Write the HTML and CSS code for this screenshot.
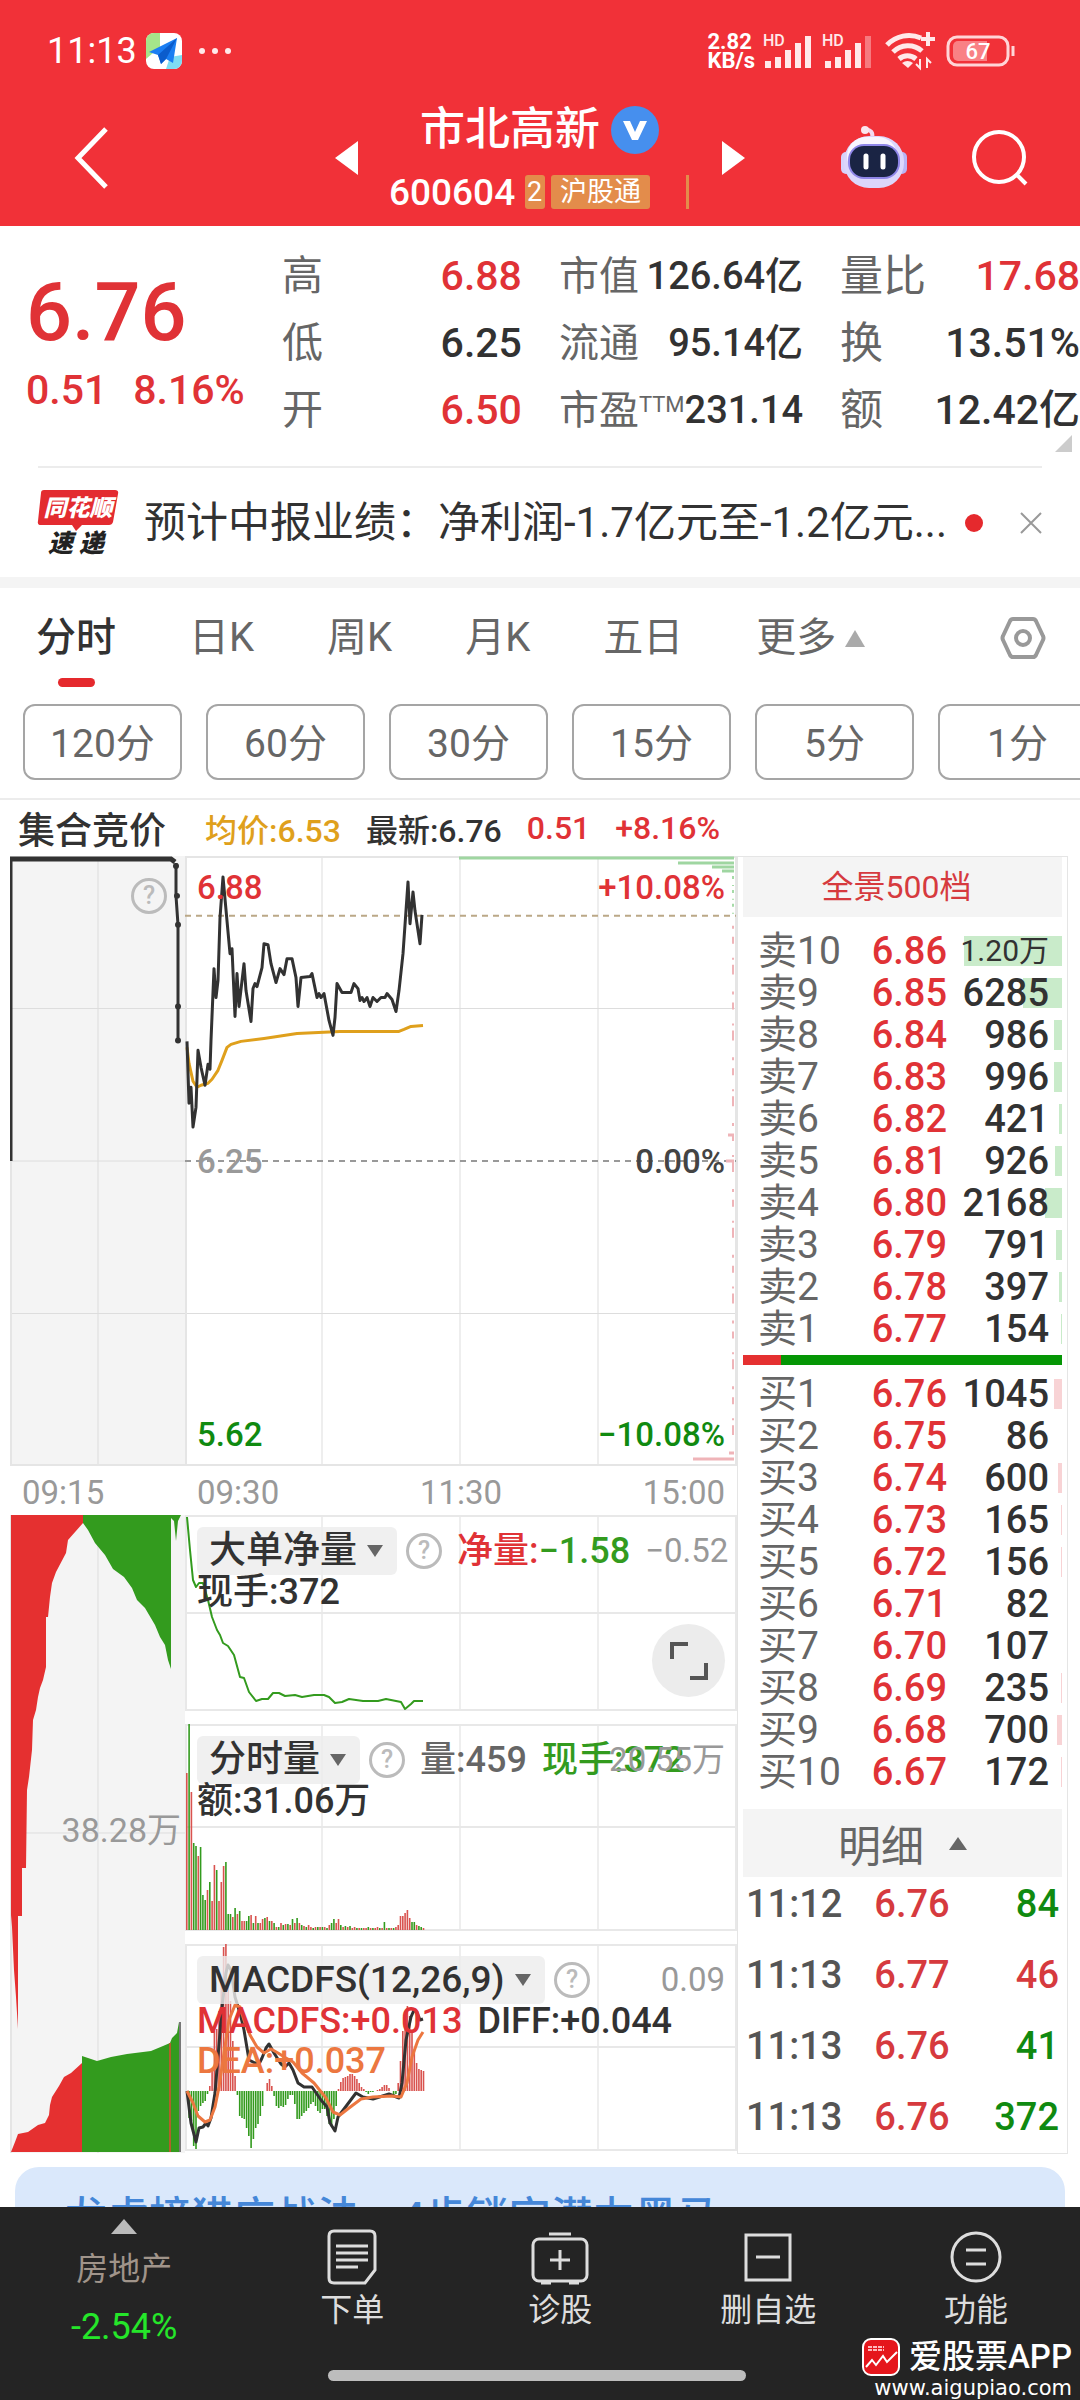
FILE: index.html
```html
<!DOCTYPE html>
<html lang="zh-CN">
  <head>
    <meta charset="utf-8">
    <meta name="viewport" content="width=device-width, initial-scale=1">
    <title>市北高新 600604</title>
    <link rel="stylesheet" href="styles.css">
  </head>
  <body>
    <div class="app">
      <header class="top">
        <div class="status">
          <span class="clock">11:13</span>
          <svg width="36" height="36" viewBox="0 0 36 36">
            <rect width="36" height="36" rx="8" fill="#fff"/>
            <path d="M8 0h6v14L0 26V8a8 8 0 0 1 8-8z" fill="#a6e58a"/>
            <path d="M20 36l4-12 12-2v6a8 8 0 0 1-8 8z" fill="#7fdcf2"/>
            <path d="M31 5L3 19l9 3 3 9 5-5 7 4z" fill="#1b7ef2"/>
            <path d="M31 5L12 22l3 9 5-5z" fill="#0b5ccc"/>
          </svg>
          <svg class="dots" width="34" height="8" viewBox="0 0 34 8" fill="#ffe9ea"><circle cx="4" cy="4" r="3"/><circle cx="17" cy="4" r="3"/><circle cx="30" cy="4" r="3"/></svg>
          <span class="speed">2.82<br>KB/s</span>
          <svg width="110" height="36" viewBox="0 0 110 36" fill="#ffe9ea">
            <text class="hd" x="0" y="13">HD</text>
            <path d="M2 28h6v7h-6zM12 24h6v11h-6zM22 17h6v18h-6zM32 10h6v25h-6zM42 3h6v32h-6z"/>
            <text class="hd" x="59" y="13">HD</text>
            <path d="M62 28h6v7h-6zM72 24h6v11h-6zM82 17h6v18h-6zM92 10h6v25h-6z"/>
            <path d="M102 3h6v32h-6z" opacity=".4"/>
          </svg>
          <svg width="50" height="38" viewBox="0 0 50 38" fill="none" stroke="#ffe9ea" stroke-width="5">
            <path d="M2 13a30 30 0 0 1 34-7M8 20a21 21 0 0 1 29-1M14 27a13 13 0 0 1 17 0"/>
            <path d="M23 36l-6-5a9 9 0 0 1 11 0z" fill="#ffe9ea" stroke="none"/>
            <path d="M43 0v14M36 7h14" stroke-width="4"/>
            <path d="M35 27v9l-4-4M42 36v-9l4 4" stroke-width="2"/>
          </svg>
          <svg width="70" height="32" viewBox="0 0 70 32">
            <rect x="2" y="2" width="60" height="28" rx="9" fill="none" stroke="#ffd5d7" stroke-width="3"/>
            <path d="M12 6h29v20H12a5 5 0 0 1-5-5V11a5 5 0 0 1 5-5z" fill="#f98185"/>
            <path d="M67 11v10" stroke="#ffd5d7" stroke-width="3"/>
            <text class="battery" x="32" y="24" text-anchor="middle">67</text>
          </svg>
        </div>
        <div class="titlebar">
          <button class="icon-btn back" aria-label="返回"><svg width="36" height="62" viewBox="0 0 36 62" fill="none" stroke="#fff" stroke-width="5"><path d="M32 2L4 31l28 29"/></svg></button>
          <button class="icon-btn prev" aria-label="上一只"><svg width="24" height="36" viewBox="0 0 24 36" fill="#fff"><path d="M23 1v34L0 18z"/></svg></button>
          <div class="stock">
            <h1 class="name">市北高新
              <svg width="48" height="48" viewBox="0 0 48 48"><circle cx="24" cy="24" r="24" fill="#468fee"/><path d="M12 15h7l5 11 5-11h7l-9 19h-6z" fill="#fff"/></svg>
            </h1>
            <div class="code-row">
              <span class="code">600604</span>
              <span class="tag tag-cut">2</span>
              <span class="tag">沪股通</span>
              <span class="tag-edge"></span>
            </div>
          </div>
          <button class="icon-btn next" aria-label="下一只"><svg width="24" height="36" viewBox="0 0 24 36" fill="#fff"><path d="M1 1v34l23-17z"/></svg></button>
          <button class="icon-btn robot" aria-label="智能助手">
            <svg width="68" height="64" viewBox="0 0 68 64">
              <path d="M32 13c2-8-3-9-6-10" fill="none" stroke="#f4d9f0" stroke-width="4"/>
              <circle cx="25" cy="4" r="4" fill="#fbe6ef"/>
              <rect x="1" y="26" width="10" height="22" rx="5" fill="#d7d2fb"/>
              <rect x="57" y="26" width="10" height="22" rx="5" fill="#b9b4f5"/>
              <rect x="4" y="10" width="60" height="52" rx="25" fill="#dcd6fb"/>
              <rect x="7" y="11" width="50" height="38" rx="19" fill="#f9f5fe"/>
              <rect x="8" y="18" width="52" height="35" rx="16" fill="#8f86e8"/>
              <rect x="10" y="20" width="48" height="31" rx="14" fill="#1a2444"/>
              <path d="M26 30v11M43 30v11" stroke="#fff" stroke-width="5" stroke-linecap="round"/>
            </svg>
          </button>
          <button class="icon-btn search" aria-label="搜索"><svg width="58" height="58" viewBox="0 0 58 58" fill="none" stroke="#fff" stroke-width="4"><circle cx="28" cy="28" r="25"/><path d="M45 45l10 10"/></svg></button>
        </div>
      </header>

      <main class="content">
        <section class="quote">
          <div class="now">
            <div class="price">6.76</div>
            <div class="change"><span>0.51</span><span>8.16%</span></div>
          </div>
          <dl class="stats">
            <div><dt>高</dt><dd class="up">6.88</dd></div>
            <div><dt>市值</dt><dd>126.64亿</dd></div>
            <div><dt>量比</dt><dd class="up">17.68</dd></div>
            <div><dt>低</dt><dd>6.25</dd></div>
            <div><dt>流通</dt><dd>95.14亿</dd></div>
            <div><dt>换</dt><dd>13.51%</dd></div>
            <div><dt>开</dt><dd class="up">6.50</dd></div>
            <div><dt>市盈<small>TTM</small></dt><dd>231.14</dd></div>
            <div><dt>额</dt><dd>12.42亿</dd></div>
          </dl>
          <span class="corner"></span>
        </section>

        <section class="news">
          <svg width="82" height="68" viewBox="0 0 82 68">
            <path d="M7 1h71q4 0 3 4l-5 28q-1 3-4 3H45l-6 6-4-6H4q-4 0-3-4L4 4q0-3 3-3z" fill="#e32b30"/>
            <text class="logo-top" x="41" y="27" text-anchor="middle">同花顺</text>
            <text class="logo-bottom" x="39" y="63" text-anchor="middle">速 递</text>
          </svg>
          <a class="headline" href="#">预计中报业绩：净利润-1.7亿元至-1.2亿元...</a>
          <span class="dot"></span>
          <button class="icon-btn" aria-label="关闭"><svg width="24" height="24" viewBox="0 0 24 24" stroke="#999" stroke-width="2"><path d="M2 2l20 20M22 2L2 22"/></svg></button>
        </section>

        <nav class="tabs">
          <button class="active">分时</button>
          <button>日K</button>
          <button>周K</button>
          <button>月K</button>
          <button>五日</button>
          <button class="more">更多</button>
          <button class="settings" aria-label="设置"><svg width="46" height="44" viewBox="0 0 46 44" fill="none" stroke="#999" stroke-width="4"><path d="M13 3h20q2 0 3 2l7 15q1 2 0 4l-7 15q-1 2-3 2H13q-2 0-3-2L3 24q-1-2 0-4l7-15q1-2 3-2z"/><circle cx="23" cy="22" r="7"/></svg></button>
        </nav>
        <div class="periods">
          <button>120分</button>
          <button>60分</button>
          <button>30分</button>
          <button>15分</button>
          <button>5分</button>
          <button>1分</button>
        </div>

        <div class="legend">
          <strong>集合竞价</strong>
          <span class="avg">均价:6.53</span>
          <span>最新:6.76</span>
          <span class="up">0.51</span>
          <span class="up">+8.16%</span>
        </div>

        <div class="market">
          <div class="charts">
            <div class="panel auction">
              <svg viewBox="10 855 175 612" preserveAspectRatio="none">
                <path d="M98 856v610M10 1008h175M10 1161h175M10 1314h175" stroke="#ddd"/>
                <path d="M11 856v610M10 1466h175" stroke="#e5e5e5" stroke-width="2"/>
                <path d="M11 1161V857" stroke="#323232" stroke-width="3" fill="none"/>
                <path d="M10 858h161l4 3" stroke="#323232" stroke-width="5" fill="none"/>
                <path d="M176 862v33l2 29v117" stroke="#323232" stroke-width="3" fill="none"/>
                <g fill="#323232"><circle cx="176" cy="865" r="3"/><circle cx="177" cy="895" r="3"/><circle cx="178" cy="924" r="3"/><circle cx="178" cy="1006" r="3"/><circle cx="178" cy="1040" r="3"/></g>
              </svg>
              <button class="help" aria-label="帮助">?</button>
            </div>
            <div class="panel intraday">
              <svg viewBox="185 855 552 612" preserveAspectRatio="none">
                <path d="M322 856v610M460 856v610M598 856v610M185 1008h551M185 1314h551" stroke="#ddd" fill="none"/>
                <path d="M186 1466V856h550v610z" stroke="#e5e5e5" stroke-width="2" fill="none"/>
                <path d="M185 915h551" stroke="#bba887" stroke-width="2" stroke-dasharray="6 5"/>
                <path d="M185 1161h551" stroke="#999" stroke-width="2" stroke-dasharray="6 5"/>
                <path d="M459 857h275M678 862h56M712 866h22M722 870h12" stroke="#9fd6a1" stroke-width="3"/>
                <path d="M733 875v42" stroke="#a6dba8" stroke-width="2" stroke-dasharray="3 6 1 4"/>
                <path d="M733 925v530" stroke="#efb4b8" stroke-width="2" stroke-dasharray="3 8 7 14 2 5 10 17"/>
                <path d="M728 1135h6M726 1161h8M729 1454h5M693 1460h41" stroke="#efb4b8" stroke-width="3"/>
                <polyline class="avg-line" points="187,1047 189,1063 193,1081 197,1087 201,1085 208,1083 212,1079 218,1070 222,1060 227,1047 231,1044 241,1041 264,1038 297,1033 340,1031 399,1031 404,1029 411,1026 423,1025"/>
                <polyline class="price-line" points="187,1041 189,1103 191,1087 193,1127 196,1107 198,1050 201,1067 205,1085 208,1064 210,1069 211,1040 214,968 216,997 218,980 220,917 223,876 227,920 230,953 232,948 235,1016 237,973 239,1006 244,963 246,990 251,1021 253,988 255,983 257,986 262,967 264,943 268,944 271,963 276,982 280,968 284,974 287,958 292,958 296,977 298,1006 301,977 310,976 312,973 317,997 319,993 321,997 324,993 329,1020 333,1035 335,1017 337,983 342,992 351,992 354,983 358,988 360,1000 362,997 364,1001 367,997 370,1006 373,997 377,1001 381,997 385,997 387,993 392,999 396,1011 399,990 403,953 408,881 410,923 413,891 415,910 420,943 422,914"/>
              </svg>
              <div class="scale">
                <div class="up"><span>6.88</span><span>+10.08%</span></div>
                <div class="flat"><span>6.25</span><span class="zero">0.00%</span></div>
                <div class="down"><span>5.62</span><span>−10.08%</span></div>
              </div>
            </div>

            <div class="axis">09:15</div>
            <div class="axis"><span>09:30</span><span>11:30</span><span>15:00</span></div>

            <div class="panel auction auction-volume">
              <svg viewBox="10 1515 175 638" preserveAspectRatio="none">
                <path d="M98 1515v638M10 1833h175" stroke="#ddd"/>
                <path d="M11 1515v638" stroke="#e5e5e5" stroke-width="2"/>
                <path fill="#e53030" d="M11 1515H83v8L68 1540 66 1553 56 1572 52 1583 50 1597 48 1617H46V1667L43 1680 40 1688 38 1697 36 1710 33 1720 32 1750 29 1777 27 1790 26 1868H22V1916H18V2029L16 1997 14 1970 12 1927 11 1915z"/>
                <path fill="#339b1e" d="M83 1515H181L178 1521 176 1541 174 1521 171 1518V1669L168 1660 165 1645 160 1637 155 1625 145 1608 137 1600 132 1588 124 1577 113 1569 105 1555 95 1543 88 1530 83 1523z"/>
                <path fill="#e53030" d="M11 2152L15 2142 18 2134 28 2132 38 2125 45 2123 49 2115 50 2105 52 2097 59 2086 64 2077 71 2073 82 2063V2152z"/>
                <path fill="#339b1e" d="M82 2152V2056L85 2057 97 2061 111 2057 127 2054 151 2051 163 2046 170 2043 172 2038 177 2033 179 2022H181V2152z"/>
                <path d="M170 2043v109" stroke="#b0602a" stroke-width="2"/>
                <path d="M180 2022v130" stroke="#777" stroke-width="2"/>
              </svg>
              <span class="volume-mid">38.28万</span>
            </div>

            <div class="indicators">
              <div class="panel indicator">
                <svg viewBox="185 1515 552 196" preserveAspectRatio="none">
                  <path d="M322 1515v195M460 1515v195M598 1515v195" stroke="#ddd"/>
                  <path d="M186 1516h550v194H186zM186 1613h550" stroke="#e8e8e8" stroke-width="2" fill="none"/>
                  <polyline class="net-line" points="187,1517 190,1550 193,1580 196,1587 199,1583 203,1583 208,1600 212,1617 217,1630 220,1635 223,1643 228,1646 234,1655 240,1677 244,1678 249,1692 256,1701 262,1699 268,1699 273,1693 279,1693 285,1696 295,1695 302,1697 314,1695 324,1695 329,1697 335,1703 342,1702 349,1699 363,1701 378,1701 386,1699 401,1702 405,1709 411,1704 414,1701 423,1701"/>
                </svg>
                <div class="readout">
                  <div class="line first">
                    <label class="picker"><select aria-label="指标一"><option>大单净量</option></select></label>
                    <button class="help" aria-label="帮助">?</button>
                    <span><span class="up">净量:</span><span class="sell">−1.58</span></span>
                    <span class="bound">−0.52</span>
                  </div>
                  <div class="line">现手:372</div>
                </div>
                <button class="expand" aria-label="全屏"><svg width="40" height="40" viewBox="0 0 40 40" fill="none" stroke="#555" stroke-width="4"><path d="M3 18V3h16M37 22v15H21"/></svg></button>
              </div>

              <div class="panel indicator">
                <svg viewBox="185 1724 552 207" preserveAspectRatio="none">
                  <path d="M322 1724v206M460 1724v206M598 1724v206" stroke="#ddd"/>
                  <path d="M186 1725h550v205H186zM186 1827h550" stroke="#e8e8e8" stroke-width="2" fill="none"/>
                  <g id="volume_bars"></g>
                </svg>
                <div class="readout">
                  <div class="line first">
                    <label class="picker"><select aria-label="指标二"><option>分时量</option></select></label>
                    <button class="help" aria-label="帮助">?</button>
                    <span class="muted">量:459</span>
                    <span class="sell">现手:372</span>
                    <span class="bound over">20.55万</span>
                  </div>
                  <div class="line">额:31.06万</div>
                </div>
              </div>

              <div class="panel indicator">
                <svg viewBox="185 1944 552 207" preserveAspectRatio="none">
                  <path d="M322 1944v206M460 1944v206M598 1944v206" stroke="#ddd"/>
                  <path d="M186 1945h550v205H186zM186 2047h550" stroke="#e8e8e8" stroke-width="2" fill="none"/>
                  <g id="macd_bars"></g>
                  <polyline class="diff-line" points="187,2091 191,2123 196,2142 199,2128 203,2127 206,2123 208,2126 211,2118 215,2093 218,2057 222,2007 226,1973 228,1965 231,1970 235,1997 240,2013 244,2030 249,2060 255,2063 259,2064 262,2058 266,2048 269,2044 274,2053 281,2064 285,2067 289,2063 293,2070 298,2083 304,2087 312,2087 321,2100 327,2107 330,2123 335,2131 338,2117 347,2105 356,2093 363,2097 373,2099 389,2094 399,2098 402,2083 406,2040 411,2017 414,2010 417,2012 420,2020 423,2019"/>
                  <polyline class="dea-line" points="187,2091 193,2103 198,2116 205,2122 210,2120 215,2107 219,2087 224,2053 229,2020 235,2005 240,2007 244,2020 250,2035 257,2047 264,2053 271,2049 278,2053 286,2058 293,2062 302,2073 314,2083 326,2098 333,2112 340,2115 349,2108 361,2099 373,2097 392,2096 401,2097 407,2083 412,2057 418,2040 423,2032"/>
                </svg>
                <div class="readout">
                  <div class="line first">
                    <label class="picker"><select aria-label="指标三"><option>MACDFS(12,26,9)</option></select></label>
                    <button class="help" aria-label="帮助">?</button>
                    <span class="bound">0.09</span>
                  </div>
                  <div class="line"><span class="up">MACDFS:+0.013</span><span>DIFF:+0.044</span></div>
                  <div class="line dea">DEA:+0.037</div>
                </div>
              </div>
            </div>
          </div>

          <aside class="depth">
            <button class="depth-head">全景500档</button>
            <table class="book" id="asks"></table>
            <div class="ratio"><span></span></div>
            <table class="book" id="bids"></table>
            <button class="ticks-head">明细</button>
            <table class="ticks">
              <tr><td>11:12</td><td class="up">6.76</td><td class="down">84</td></tr>
              <tr><td>11:13</td><td class="up">6.77</td><td class="up">46</td></tr>
              <tr><td>11:13</td><td class="up">6.76</td><td class="down">41</td></tr>
              <tr><td>11:13</td><td class="up">6.76</td><td class="down">372</td></tr>
            </table>
          </aside>
        </div>

        <a class="banner" href="#">龙虎榜猎庄战法，4步锁定潜力黑马</a>
      </main>

      <footer class="bottom">
        <nav class="actions">
          <a class="sector" href="#"><span class="sector-name">房地产</span><span class="sector-change">-2.54%</span></a>
          <a href="#">
            <svg width="58" height="58" viewBox="0 0 58 58" fill="none" stroke="#ddd" stroke-width="3"><path d="M11 3h36q5 0 5 5v34L42 55H11q-5 0-5-5V8q0-5 5-5zM13 18h32M13 25h32M13 32h32M13 39h22"/></svg>
            下单
          </a>
          <a href="#">
            <svg width="58" height="58" viewBox="0 0 58 58" fill="none" stroke="#ddd" stroke-width="3"><rect x="2" y="11" width="54" height="42" rx="6"/><path d="M18 6h22M29 22v20M19 32h20M10 55h10M38 55h10"/></svg>
            诊股
          </a>
          <a href="#">
            <svg width="58" height="58" viewBox="0 0 58 58" fill="none" stroke="#ddd" stroke-width="3"><path d="M7 7h44v45H7zM17 29h24"/></svg>
            删自选
          </a>
          <a href="#">
            <svg width="58" height="58" viewBox="0 0 58 58" fill="none" stroke="#ddd" stroke-width="3"><circle cx="29" cy="29" r="24"/><path d="M19 22h20M19 36h20"/></svg>
            功能
          </a>
        </nav>
        <div class="home-bar"></div>
        <div class="mark">
          <div class="mark-name">
            <svg width="38" height="38" viewBox="0 0 38 38"><rect x="1" y="1" width="36" height="36" rx="8" fill="#e5161c" stroke="#fff" stroke-width="2"/><path d="M6 9h16M6 12h16" stroke="#ffb9bb" stroke-width="2" stroke-dasharray="4 1"/><path d="M4 29l6-7 4 5 7-9 4 6 10-10" fill="none" stroke="#fff" stroke-width="2"/></svg>
            爱股票APP
          </div>
          <div class="mark-url">www.aigupiao.com</div>
        </div>
      </footer>
    </div>
    <script src="script.js"></script>
  </body>
</html>
```
FILE: styles.css
```css
* {
  box-sizing: border-box;
}

body {
  margin: 0;
  background: #fff;
  color: #323232;
  font-family: Roboto, "Noto Sans CJK SC", sans-serif;
  font-weight: 500;
}

button,
select {
  margin: 0;
  padding: 0;
  border: 0;
  background: none;
  color: inherit;
  font: inherit;
}

a {
  color: inherit;
  text-decoration: none;
}

svg {
  display: block;
}

table {
  border-collapse: collapse;
}

.up {
  color: #e03236;
}

.down {
  color: #108a10;
}

.sell {
  color: #339b1e;
}

.muted {
  color: #666;
}

.app {
  display: flex;
  flex-direction: column;
  height: 100vh;
}

/* header */

.top {
  background: #f13138;
  color: #fff;
}

.status {
  display: flex;
  align-items: center;
  height: 102px;
  padding: 0 64px 0 47px;
}

.status svg {
  overflow: visible;
}

.clock {
  width: 99px;
  font-size: 36px;
  font-weight: 400;
}

.dots {
  margin-left: 16px;
}

.speed {
  margin: 0 8px 0 auto;
  font-size: 22px;
  font-weight: 700;
  line-height: 19px;
}

.status svg:nth-last-child(2) {
  margin: 0 11px 0 12px;
}

.hd {
  font-size: 16px;
}

.battery {
  fill: #fff;
  font-size: 22px;
}

.titlebar {
  display: grid;
  grid-template-columns: 110px 1fr 362px 90px 126px 126px;
  align-items: center;
  height: 124px;
  padding: 0 17px 12px 0;
}

.back,
.prev {
  justify-self: end;
}

.next {
  justify-self: start;
}

.stock {
  padding-left: 30px;
}

.name {
  display: flex;
  align-items: center;
  gap: 11px;
  margin: 0;
  padding-left: 31px;
  font-size: 45px;
  font-weight: 500;
  line-height: 56px;
}

.code-row {
  display: flex;
  align-items: center;
  gap: 6px;
  height: 44px;
  margin-top: 12px;
}

.code {
  width: 130px;
  font-size: 37px;
}

.tag {
  padding: 0 9px;
  border-radius: 3px;
  background: #e38c4b;
  font-size: 27px;
  font-weight: 400;
  line-height: 34px;
}

.tag-cut {
  width: 20px;
  padding: 0 2px;
}

.tag-edge {
  width: 3px;
  height: 34px;
  margin-left: 30px;
  background: #e38c4b;
}

.robot,
.search {
  justify-self: center;
}

/* quote */

.content {
  flex: 1;
  min-height: 0;
  overflow: hidden;
}

.quote {
  position: relative;
  display: grid;
  grid-template-columns: 256px 1fr;
  padding: 17px 0 24px 26px;
}

.quote::after {
  content: "";
  position: absolute;
  right: 38px;
  bottom: 0;
  left: 38px;
  border-bottom: 2px solid #ececec;
}

.now {
  padding-top: 24px;
  color: #e03236;
}

.price {
  font-size: 81px;
  line-height: 92px;
}

.change {
  display: flex;
  gap: 26px;
  font-size: 41px;
  line-height: 62px;
}

.stats {
  display: grid;
  grid-template-columns: 1fr 1fr 1fr;
  column-gap: 37px;
  margin: 0;
  font-size: 41px;
  line-height: 67px;
}

.stats div {
  display: flex;
  justify-content: space-between;
  height: 67px;
  white-space: nowrap;
}

.stats dt {
  color: #666;
  font-weight: 400;
}

.stats small {
  font-size: 22px;
  vertical-align: 12px;
  line-height: 1;
}

.stats dd {
  margin: 0;
}

.stats div:nth-child(3n+2) {
  font-size: 40px;
}

.stats div:nth-child(3n+2) dd {
  font-size: 38px;
}

.stats div:nth-child(3n) dt {
  font-size: 43px;
}

.corner {
  position: absolute;
  right: 8px;
  bottom: 16px;
  border: solid transparent;
  border-width: 0 0 17px 17px;
  border-bottom-color: #ccc;
}

.news {
  display: flex;
  align-items: center;
  height: 109px;
  padding: 0 37px;
}

.logo-top,
.logo-bottom {
  fill: #fff;
  font-size: 23px;
  font-style: italic;
  font-weight: 900;
}

.logo-bottom {
  fill: #222;
  font-size: 25px;
}

.headline {
  flex: 1;
  min-width: 0;
  margin-left: 25px;
  overflow: hidden;
  font-size: 42px;
  font-weight: 400;
  line-height: 60px;
  text-overflow: ellipsis;
  white-space: nowrap;
}

.dot {
  width: 18px;
  height: 18px;
  margin-right: 36px;
  border-radius: 50%;
  background: #e5292d;
}

/* chart tabs */

.tabs {
  display: flex;
  align-items: flex-start;
  gap: 73px;
  padding: 22px 34px 17px 36px;
  border-top: 11px solid #f4f4f4;
  color: #666;
  font-size: 40px;
  line-height: 56px;
}

.tabs button {
  font-weight: 400;
}

.tabs .active {
  color: #323232;
  font-weight: 500;
}

.active::after {
  content: "";
  display: block;
  width: 37px;
  height: 9px;
  margin: 12px auto 0;
  border-radius: 5px;
  background: #e5292d;
}

.more {
  display: flex;
  align-items: center;
  gap: 9px;
}

.more::after {
  content: "";
  border: 10px solid transparent;
  border-top: 0;
  border-bottom: 17px solid #aaa;
}

.tabs .settings {
  margin: 6px 0 0 auto;
}

.periods {
  display: flex;
  gap: 24px;
  height: 94px;
  padding: 0 23px 18px;
  overflow: hidden;
}

.periods button {
  flex: none;
  width: 159px;
  padding-bottom: 4px;
  border: 2px solid #a5a5a5;
  border-radius: 12px;
  color: #666;
  font-size: 39px;
  font-weight: 400;
}

.legend {
  display: flex;
  align-items: center;
  gap: 25px;
  height: 58px;
  padding-left: 18px;
  border-top: 2px solid #ececec;
  font-size: 32px;
}

.legend strong {
  margin-right: 14px;
  font-size: 37px;
  font-weight: 500;
}

.avg {
  color: #dfa01c;
}

/* charts and order book */

.market {
  display: grid;
  grid-template-columns: minmax(0, 1fr) 331px;
  padding: 0 12px 0 10px;
}

.charts {
  display: grid;
  grid-template-columns: 175px minmax(0, 1fr);
  align-content: start;
}

.panel {
  position: relative;
  display: grid;
  grid-template-columns: minmax(0, 1fr);
  height: 610px;
}

.panel > svg {
  grid-area: 1 / 1;
  width: 100%;
  height: 100%;
}

.auction {
  background: #f4f4f4;
}

.auction-volume {
  height: 638px;
}

.help {
  flex: none;
  width: 36px;
  height: 36px;
  border: 3px solid #bbb;
  border-radius: 50%;
  color: #bbb;
  font-size: 25px;
  line-height: 30px;
}

.auction .help {
  position: absolute;
  top: 22px;
  right: 18px;
}

.scale {
  z-index: 1;
  display: flex;
  flex-direction: column;
  grid-area: 1 / 1;
  justify-content: space-between;
  padding: 12px 12px 11px;
  font-size: 33px;
  line-height: 40px;
}

.scale div {
  display: flex;
  justify-content: space-between;
}

.flat {
  color: #999;
}

.zero {
  color: #444;
}

.axis {
  display: flex;
  justify-content: space-between;
  padding: 4px 12px 0;
  color: #999;
  font-size: 33px;
  font-weight: 400;
  line-height: 45px;
}

.volume-mid {
  z-index: 1;
  grid-area: 1 / 1;
  place-self: center end;
  margin: 0 4px 14px 0;
  color: #999;
  font-size: 34px;
  font-weight: 400;
}

.indicators {
  display: flex;
  flex-direction: column;
  gap: 13px;
}

.indicator {
  height: 207px;
}

.indicator:first-child {
  height: 196px;
}

.readout {
  z-index: 1;
  grid-area: 1 / 1;
  padding: 12px 12px 0;
  font-size: 36px;
  line-height: 40px;
}

.line {
  display: flex;
  gap: 15px;
  white-space: nowrap;
}

.line.first {
  align-items: center;
  height: 48px;
  margin-bottom: -3px;
}

.picker {
  display: flex;
  align-items: center;
  gap: 10px;
  height: 48px;
  padding: 0 14px 0 12px;
  border-radius: 6px;
  background: rgba(236, 236, 236, 0.8);
  font-size: 37px;
}

.picker::after {
  content: "";
  border: 8px solid transparent;
  border-top: 12px solid #666;
  border-bottom: 0;
}

.picker select {
  appearance: none;
  line-height: 48px;
}

.picker + .help {
  margin-left: -6px;
}

.line .bound {
  margin: 0 0 0 auto;
  color: #999;
  font-size: 33px;
  font-weight: 400;
}

.line .over {
  position: absolute;
  right: 12px;
}

.dea {
  color: #ec7740;
}

.expand {
  position: absolute;
  right: 12px;
  bottom: 14px;
  z-index: 1;
  display: grid;
  place-items: center;
  width: 73px;
  height: 73px;
  border-radius: 50%;
  background: #ececec;
}

.price-line,
.avg-line,
.net-line,
.diff-line,
.dea-line {
  fill: none;
  stroke: #323232;
  stroke-width: 3;
  stroke-linejoin: round;
}

.avg-line {
  stroke: #dfa01c;
}

.net-line {
  stroke: #339b1e;
  stroke-width: 2;
}

.dea-line {
  stroke: #ec7740;
}

.depth {
  padding: 0 5px;
  border: 1px solid #e5e5e5;
}

.depth-head {
  display: block;
  width: 100%;
  height: 60px;
  margin-bottom: 13px;
  padding: 0 12px 6px 0;
  background: #f4f4f4;
  color: #d63a3e;
  font-size: 32px;
  font-weight: 400;
}

.book {
  width: 100%;
  table-layout: fixed;
  line-height: 42px;
}

.book td {
  height: 42px;
  padding: 0;
  font-size: 38px;
}

.book td:first-child {
  width: 112px;
  padding-left: 15px;
  color: #666;
  font-size: 39px;
  font-weight: 400;
  white-space: nowrap;
}

.book td:nth-child(2) {
  width: 92px;
  text-align: right;
}

.book .amount {
  position: relative;
  padding-right: 13px;
  text-align: right;
  white-space: nowrap;
}

.book .small {
  font-size: 30px;
  font-weight: 400;
}

.amount span {
  position: relative;
}

.bar {
  position: absolute;
  top: 6px;
  right: 0;
  height: 30px;
  background: #c9ebca;
}

#bids .bar {
  background: #f8d3d5;
}

.ratio {
  height: 10px;
  margin: 5px 0 8px;
  background: #059605;
}

.ratio span {
  display: block;
  width: 12%;
  height: 10px;
  background: #e53030;
}

.ticks-head {
  display: flex;
  align-items: center;
  justify-content: center;
  gap: 25px;
  width: 100%;
  height: 68px;
  margin: 16px 0 2px;
  background: #f4f4f4;
  color: #666;
  font-size: 43px;
  font-weight: 400;
}

.ticks-head::after {
  content: "";
  border: 9px solid transparent;
  border-top: 0;
  border-bottom: 13px solid #666;
}

.ticks {
  width: 100%;
  font-size: 38px;
  line-height: 51px;
}

.ticks td {
  padding: 0 3px 20px 3px;
  color: #555;
}

.ticks tr:last-child td {
  padding-bottom: 10px;
}

.ticks td.up {
  color: #d63a3e;
}

.ticks td.down {
  color: #108a10;
}

.ticks td:last-child {
  text-align: right;
}

.banner {
  display: block;
  height: 120px;
  margin: 13px 15px 0;
  padding: 21px 50px;
  border-radius: 24px;
  background: #dae8fb;
  color: #4587d8;
  font-size: 42px;
  line-height: 60px;
}

/* bottom bar */

.bottom {
  position: relative;
  flex: none;
  height: 193px;
  background: #242424;
  color: #ddd;
}

.actions {
  display: grid;
  grid-template-columns: 23% repeat(4, 1fr);
  font-size: 32px;
  font-weight: 400;
  line-height: 48px;
}

.actions a {
  display: flex;
  flex-direction: column;
  align-items: center;
  padding-top: 21px;
}

.actions .sector {
  padding-top: 12px;
}

.sector::before {
  content: "";
  border: 13px solid transparent;
  border-top: 0;
  border-bottom: 15px solid #bbb;
}

.sector-name {
  margin-top: 11px;
  color: #a0948a;
}

.sector-change {
  margin-top: 10px;
  color: #25e62a;
  font-size: 36px;
}

.home-bar {
  position: absolute;
  bottom: 19px;
  left: 50%;
  width: 418px;
  height: 11px;
  margin-left: -212px;
  border-radius: 6px;
  background: #bdbdbd;
}

.mark {
  position: absolute;
  right: 8px;
  bottom: 0;
  color: #fff;
}

.mark-name {
  display: flex;
  align-items: center;
  gap: 9px;
  font-size: 33px;
  line-height: 38px;
}

.mark-url {
  font-family: "DejaVu Sans", sans-serif;
  font-size: 21px;
  line-height: 24px;
  text-align: right;
}
```
FILE: script.js
```javascript
const red = '#d9534f';
const green = '#339b1e';

// label, price, amount, bar width
const asks = [
  ['卖10', '6.86', '1.20万', 98], ['卖9', '6.85', '6285', 39], ['卖8', '6.84', '986', 8],
  ['卖7', '6.83', '996', 8], ['卖6', '6.82', '421', 3], ['卖5', '6.81', '926', 7],
  ['卖4', '6.80', '2168', 17], ['卖3', '6.79', '791', 6], ['卖2', '6.78', '397', 3],
  ['卖1', '6.77', '154', 1]
];
const bids = [
  ['买1', '6.76', '1045', 8], ['买2', '6.75', '86', 0], ['买3', '6.74', '600', 4],
  ['买4', '6.73', '165', 1], ['买5', '6.72', '156', 1], ['买6', '6.71', '82', 0],
  ['买7', '6.70', '107', 0], ['买8', '6.69', '235', 1], ['买9', '6.68', '700', 5],
  ['买10', '6.67', '172', 1]
];

// minus means a falling minute
const volume = [
  157, -207, 138, -87, -84, 74, -83, -35, -30, 40, -48, 29, 65, -60, 29, 48, 64, -68, -16, -16,
  13, -22, 16, -19, 9, 9, -9, -14, 15, -7, 14, -7, 7, 11, -12, 13, -9, 9, -7, 3,
  -3, 7, -5, 6, -6, 5, -11, 7, -12, 7, -5, 4, -3, 5, 3, -2, 3, -3, 3, -3,
  3, -2, 5, -7, -11, 7, 11, -5, 3, -4, 3, -4, 2, 3, -2, 2, -2, 2, 2, -3,
  2, -2, 2, 3, -2, 2, -8, 2, -2, 2, -2, 3, 5, 14, 14, 17, 20, 12, -8, -8,
  5, -4, -3, 2
];

const macd = [
  -3, -27, -30, -55, -58, -20, -15, -12, -10, -3, 5, 20, 60, 62, 80, 110, 144, 147, 110, 90,
  50, 15, -4, -25, -27, -28, -37, -45, -57, -48, -37, -33, -25, -15, 0, 8, 12, 5, -5, -15,
  -17, -15, -16, -14, -8, -4, -4, -13, -28, -28, -25, -22, -20, -17, -13, -11, -15, -20, -22, -18,
  -18, -25, -33, -36, -28, -15, 2, 9, 13, 14, 15, 17, 17, 15, 12, 8, 4, 2, -1, -3,
  -1, -1, 0, 1, 2, 4, 6, 6, 3, 0, -6, -3, 8, 30, 60, 80, 85, 75, 60, 40,
  28, 22, 21, 20
];

function print_book(id, rows) {
  document.getElementById(id).innerHTML = rows.map(([label, price, amount, width]) => {
    const small = amount.endsWith('万') ? ' small' : '';
    return `<tr><td>${label}</td><td class="up">${price}</td><td class="amount${small}"><i class="bar" style="width:${width}px"></i><span>${amount}</span></td></tr>`;
  }).join('');
}

function draw_bars(id, values, base, both_sides) {
  const step = 239 / values.length;

  document.getElementById(id).innerHTML = values.map((value, i) => {
    const height = Math.abs(value);
    const y = both_sides && value < 0 ? base : base - height;
    return `<rect x="${(186 + i * step).toFixed(1)}" y="${y}" width="1.6" height="${height}" fill="${value < 0 ? green : red}"/>`;
  }).join('');
}

print_book('asks', asks);
print_book('bids', bids);
draw_bars('volume_bars', volume, 1930, false);
draw_bars('macd_bars', macd, 2091, true);
```
